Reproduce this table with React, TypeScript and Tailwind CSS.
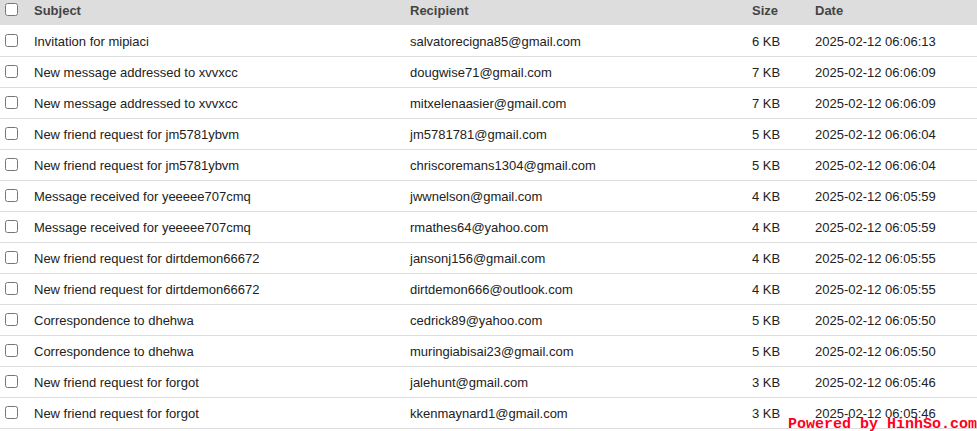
const rows = [
  ['Invitation for mipiaci', 'salvatorecigna85@gmail.com', '6 KB', '2025-02-12 06:06:13'],
  ['New message addressed to xvvxcc', 'dougwise71@gmail.com', '7 KB', '2025-02-12 06:06:09'],
  ['New message addressed to xvvxcc', 'mitxelenaasier@gmail.com', '7 KB', '2025-02-12 06:06:09'],
  ['New friend request for jm5781ybvm', 'jm5781781@gmail.com', '5 KB', '2025-02-12 06:06:04'],
  ['New friend request for jm5781ybvm', 'chriscoremans1304@gmail.com', '5 KB', '2025-02-12 06:06:04'],
  ['Message received for yeeeee707cmq', 'jwwnelson@gmail.com', '4 KB', '2025-02-12 06:05:59'],
  ['Message received for yeeeee707cmq', 'rmathes64@yahoo.com', '4 KB', '2025-02-12 06:05:59'],
  ['New friend request for dirtdemon66672', 'jansonj156@gmail.com', '4 KB', '2025-02-12 06:05:55'],
  ['New friend request for dirtdemon66672', 'dirtdemon666@outlook.com', '4 KB', '2025-02-12 06:05:55'],
  ['Correspondence to dhehwa', 'cedrick89@yahoo.com', '5 KB', '2025-02-12 06:05:50'],
  ['Correspondence to dhehwa', 'muringiabisai23@gmail.com', '5 KB', '2025-02-12 06:05:50'],
  ['New friend request for forgot', 'jalehunt@gmail.com', '3 KB', '2025-02-12 06:05:46'],
  ['New friend request for forgot', 'kkenmaynard1@gmail.com', '3 KB', '2025-02-12 06:05:46']
]

export default function App() {
  return (
    <div className="relative w-[977px] h-[431px] overflow-hidden bg-white font-['Liberation_Sans',Arial,sans-serif] text-[13px] text-[#222]">
      <table className="w-full border-collapse table-fixed">
        <colgroup>
          <col className="w-[26px]" />
          <col className="w-[376px]" />
          <col className="w-[342px]" />
          <col className="w-[63px]" />
          <col />
        </colgroup>
        <thead>
          <tr className="h-[25px] bg-[#dddddd] text-[#444] font-bold">
            <th className="pl-[5px] pt-[3px] pb-[9px] text-left align-top">
              <input type="checkbox" className="block m-0 w-[13px] h-[13px]" />
            </th>
            <th className="pl-2 pb-[4px] text-left">Subject</th>
            <th className="pl-2 pb-[4px] text-left">Recipient</th>
            <th className="pl-2 pb-[4px] text-left">Size</th>
            <th className="pl-2 pb-[4px] text-left">Date</th>
          </tr>
        </thead>
        <tbody>
          {rows.map((r, i) => (
            <tr key={i} className="h-[31px] border-b border-[#dddddd]">
              <td className="pl-[5px]">
                <input type="checkbox" className="block m-0 w-[13px] h-[13px]" />
              </td>
              <td className="pl-2 pt-[2px] truncate">{r[0]}</td>
              <td className="pl-2 pt-[2px] truncate">{r[1]}</td>
              <td className="pl-2 pt-[2px]">{r[2]}</td>
              <td className="pl-2 pt-[2px]">{r[3]}</td>
            </tr>
          ))}
        </tbody>
      </table>
      <div className="absolute right-0 bottom-[-3px] font-['Liberation_Mono',monospace] font-bold text-[15px] leading-[18px] text-[#ff0022]">
        Powered by HinhSo.com
      </div>
    </div>
  )
}
